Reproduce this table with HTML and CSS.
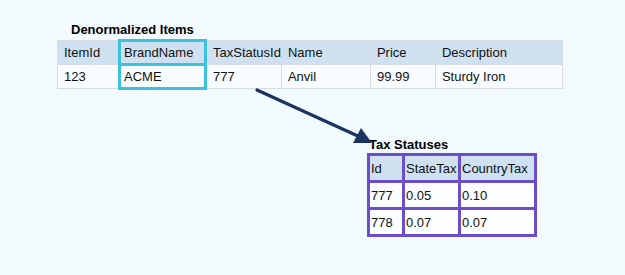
FILE: index.html
```html
<!DOCTYPE html>
<html>
<head>
<meta charset="utf-8">
<link rel="stylesheet" href="styles.css">
</head>
<body>
<div class="canvas">
  <section class="items">
    <div class="title title-items">Denormalized Items</div>
    <table class="grid items-table">
      <tr class="head">
        <td class="c-item">ItemId</td>
        <td class="c-brand hl">BrandName</td>
        <td class="c-tax">TaxStatusId</td>
        <td class="c-name">Name</td>
        <td class="c-price">Price</td>
        <td class="c-desc">Description</td>
      </tr>
      <tr class="row">
        <td>123</td>
        <td class="hl">ACME</td>
        <td>777</td>
        <td>Anvil</td>
        <td>99.99</td>
        <td>Sturdy Iron</td>
      </tr>
    </table>
  </section>
  <section class="statuses">
    <div class="title">Tax Statuses</div>
    <table class="grid tax-table">
      <tr class="head">
        <td class="c-id">Id</td>
        <td class="c-state">StateTax</td>
        <td class="c-country">CountryTax</td>
      </tr>
      <tr class="row"><td>777</td><td>0.05</td><td>0.10</td></tr>
      <tr class="row"><td>778</td><td>0.07</td><td>0.07</td></tr>
    </table>
  </section>
  <svg class="arrow" width="625" height="275" viewBox="0 0 625 275">
    <line x1="257" y1="90" x2="360" y2="137" stroke="#1b3461" stroke-width="3.2" stroke-linecap="round"/>
    <polygon points="372,143 353,143 361,128" fill="#1b3461"/>
  </svg>
</div>
</body>
</html>
```
FILE: styles.css
```css
html, body {
  margin: 0;
  padding: 0;
  background: #f3fafe;
}
body {
  font-family: "Liberation Sans", Arial, sans-serif;
  color: #111;
}
.canvas {
  position: relative;
  width: 625px;
  height: 275px;
  overflow: hidden;
}
.title {
  font-weight: bold;
  font-size: 13px;
  line-height: 16px;
  color: #000;
}
.items {
  padding: 22px 0 0 57px;
}
.title-items {
  margin-left: 14px;
  margin-bottom: 1px;
}
.grid {
  border-collapse: collapse;
  table-layout: fixed;
  font-size: 13px;
}
.items-table td {
  border: 1px solid #d6dce3;
  height: 24px;
  padding: 0 0 0 6px;
  box-sizing: border-box;
  white-space: nowrap;
}
.items-table .head td {
  background: #cfe1f1;
}
.items-table .row td {
  background: #f8fcff;
}
.items-table td.hl {
  border: 3px solid #3dc2de;
  padding-left: 3px;
}
.c-item { width: 62px; }
.c-brand { width: 86px; }
.c-tax { width: 73px; }
.c-name { width: 89px; }
.c-price { width: 65px; }
.c-desc { width: 127px; }

.statuses {
  padding: 47px 0 0 367px;
}
.statuses .title {
  margin-left: 2px;
}
.tax-table td {
  border: 3px solid #6a4ecb;
  height: 27px;
  padding: 0 0 0 1px;
  box-sizing: border-box;
  white-space: nowrap;
}
.tax-table .head td {
  background: #cfe1f1;
}
.tax-table .row td {
  background: #fbfdff;
}
.c-id { width: 35px; }
.c-state { width: 56px; }
.c-country { width: 76px; }

.arrow {
  position: absolute;
  left: 0;
  top: 0;
  pointer-events: none;
}
```
